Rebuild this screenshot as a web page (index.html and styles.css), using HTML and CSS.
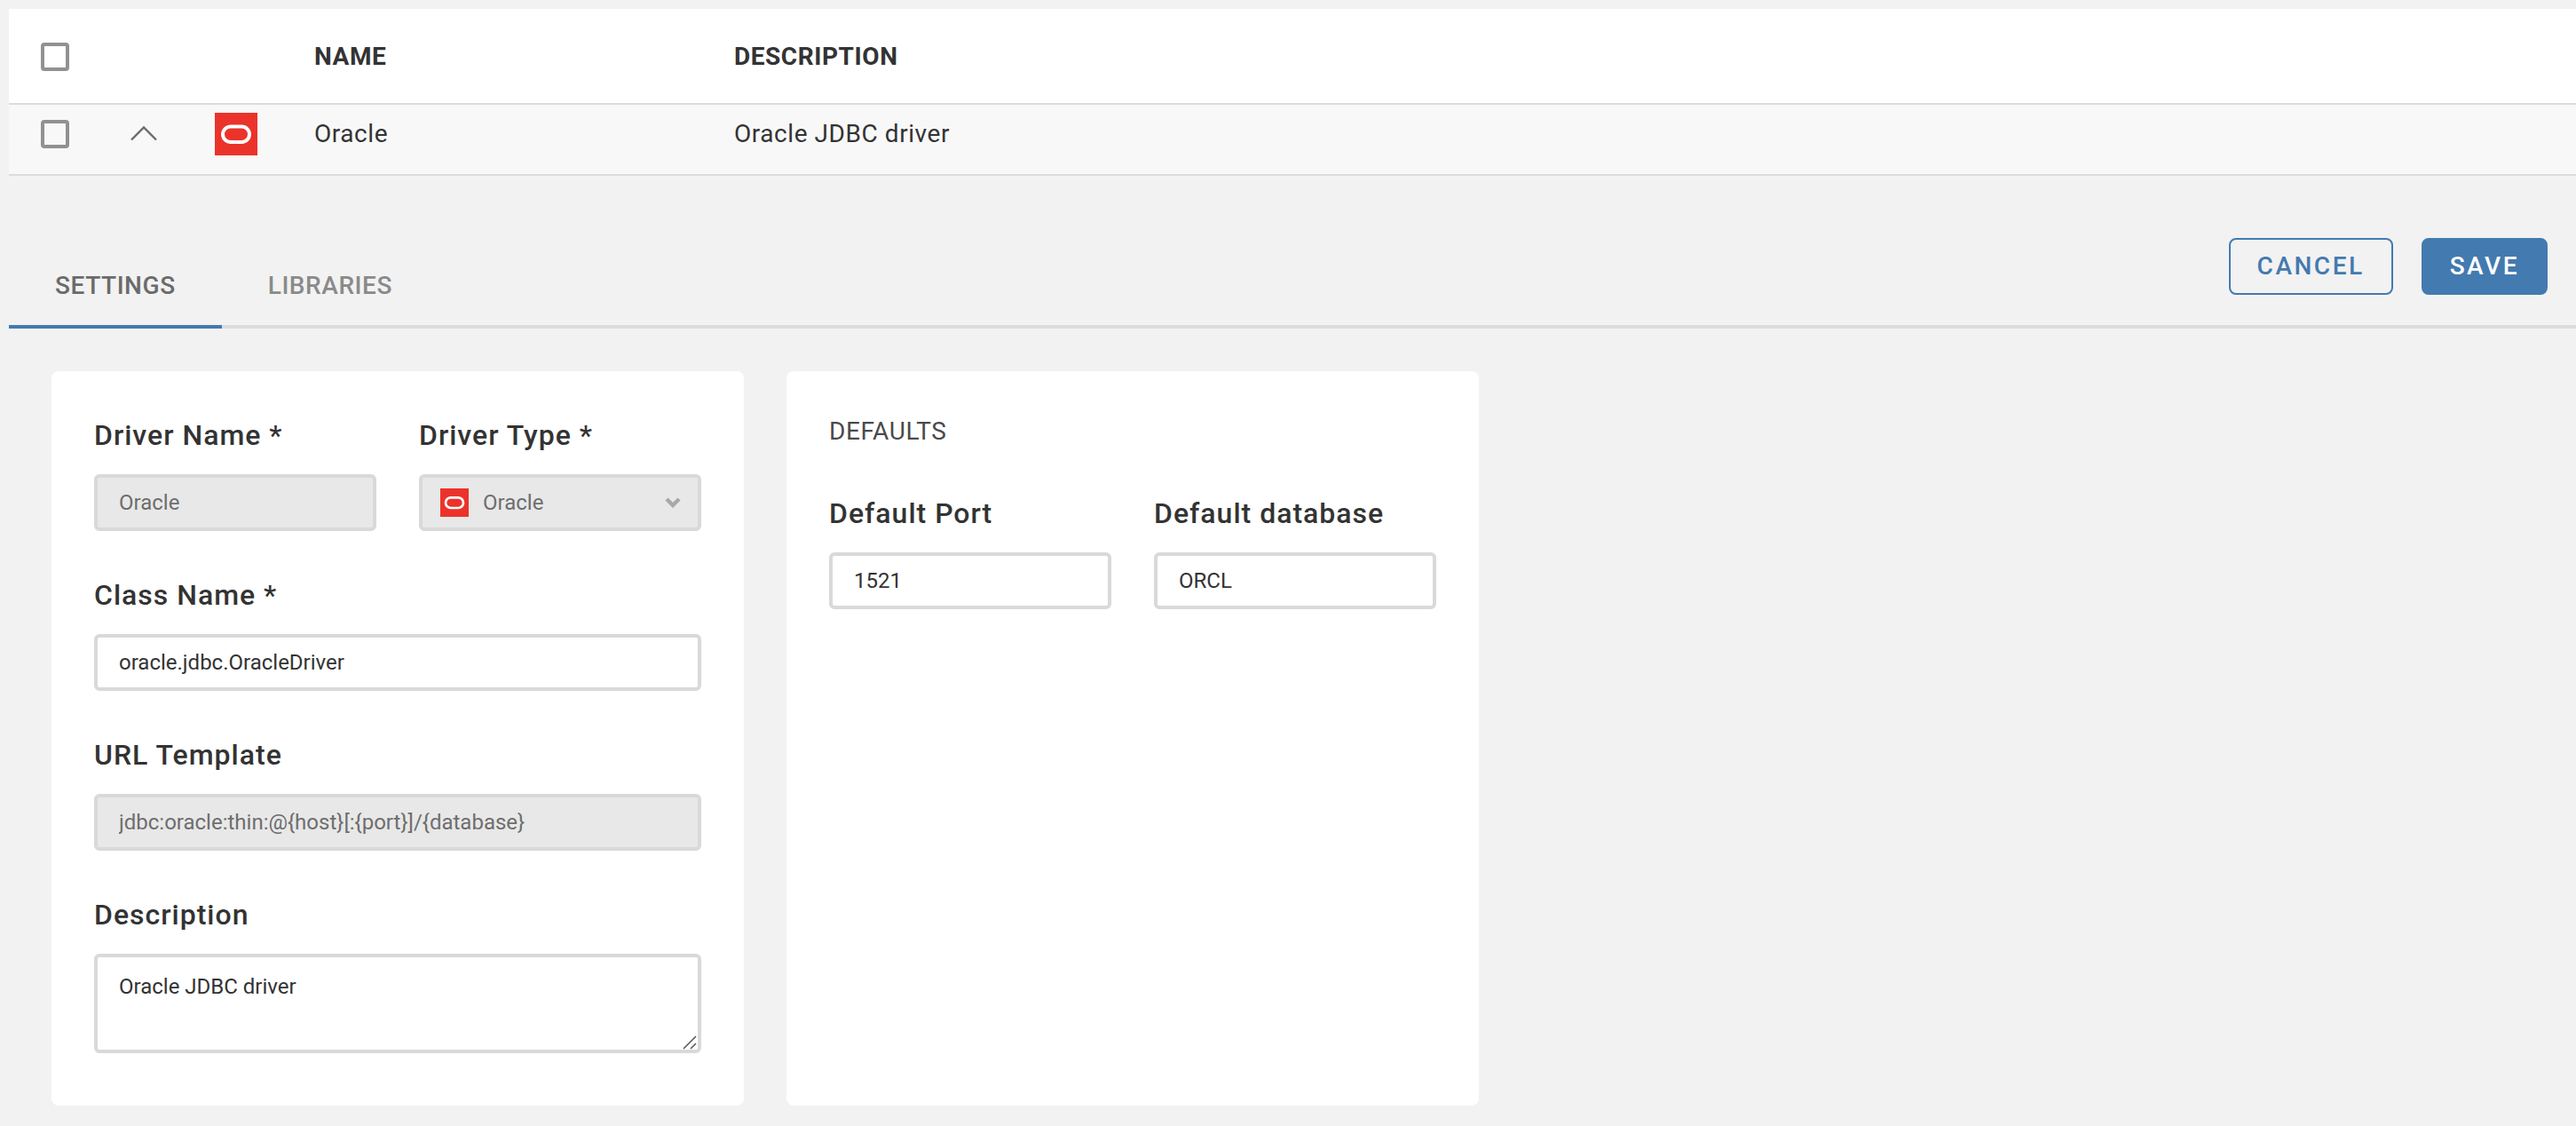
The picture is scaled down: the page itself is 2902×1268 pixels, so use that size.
FILE: index.html
```html
<!DOCTYPE html>
<html lang="en">
<head>
  <meta charset="utf-8">
  <title>Drivers</title>
  <link rel="stylesheet" href="styles.css">
</head>
<body>
  <svg class="sprite" aria-hidden="true">
    <symbol id="oracle" viewBox="0 0 48 48">
      <path fill="#eb332b" d="M0 0h48v48H0z"/>
      <rect x="9" y="15.5" width="30" height="17.5" rx="8.75" fill="none" stroke="#fff" stroke-width="4"/>
    </symbol>
  </svg>
  <main class="page">
    <table class="drivers">
      <colgroup>
        <col class="col-check"><col class="col-toggle"><col class="col-logo"><col class="col-name"><col>
      </colgroup>
      <thead>
        <tr>
          <th class="cell-check"><input class="checkbox" type="checkbox" aria-label="Select all"></th>
          <td></td>
          <td></td>
          <th class="cell-text" scope="col">NAME</th>
          <th class="cell-text" scope="col">DESCRIPTION</th>
        </tr>
      </thead>
      <tbody>
        <tr>
          <td class="cell-check"><input class="checkbox" type="checkbox" aria-label="Select Oracle"></td>
          <td>
            <button class="toggle" type="button" aria-label="Collapse" aria-expanded="true">
              <svg width="32" height="20" viewBox="0 0 32 20"><path d="M2 17.5 16 3.5l14 14" fill="none" stroke="#6b6b6b" stroke-width="2.4"/></svg>
            </button>
          </td>
          <td><svg class="logo" width="48" height="48"><use href="#oracle"/></svg></td>
          <td class="cell-text">Oracle</td>
          <td class="cell-text">Oracle JDBC driver</td>
        </tr>
      </tbody>
    </table>

    <header class="bar">
      <nav class="tabs">
        <button class="tab tab-active" type="button">SETTINGS</button>
        <button class="tab" type="button">LIBRARIES</button>
      </nav>
      <div class="actions">
        <button class="button" type="button">CANCEL</button>
        <button class="button button-primary" type="button">SAVE</button>
      </div>
    </header>

    <form class="panels">
      <section class="card">
        <div class="row">
          <div class="field">
            <label for="driver-name">Driver Name *</label>
            <input class="control" id="driver-name" type="text" value="Oracle" disabled>
          </div>
          <div class="field">
            <label for="driver-type">Driver Type *</label>
            <div class="overlay">
              <select class="control control-select" id="driver-type" disabled>
                <option>Oracle</option>
              </select>
              <svg class="select-logo" width="32" height="32"><use href="#oracle"/></svg>
              <svg class="select-arrow" width="18" height="12" viewBox="0 0 18 12"><path d="M2 2l7 7 7-7" fill="none" stroke="#a8a8a8" stroke-width="4.4"/></svg>
            </div>
          </div>
        </div>
        <div class="field">
          <label for="class-name">Class Name *</label>
          <input class="control" id="class-name" type="text" value="oracle.jdbc.OracleDriver">
        </div>
        <div class="field">
          <label for="url-template">URL Template</label>
          <input class="control" id="url-template" type="text" value="jdbc:oracle:thin:@{host}[:{port}]/{database}" disabled>
        </div>
        <div class="field">
          <label for="description">Description</label>
          <div class="overlay">
            <textarea class="control control-area" id="description">Oracle JDBC driver</textarea>
            <svg class="grip" width="16" height="16" viewBox="0 0 16 16"><path d="M1 15 15 1M9 15l6-6" fill="none" stroke="#555" stroke-width="1.5"/></svg>
          </div>
        </div>
      </section>

      <section class="card">
        <h2 class="card-title">DEFAULTS</h2>
        <div class="row">
          <div class="field">
            <label for="port">Default Port</label>
            <input class="control" id="port" type="text" value="1521">
          </div>
          <div class="field">
            <label for="database">Default database</label>
            <input class="control" id="database" type="text" value="ORCL">
          </div>
        </div>
      </section>
    </form>
  </main>
</body>
</html>
```

FILE: styles.css
```css
* {
  box-sizing: border-box;
}

body {
  margin: 0;
  background: #f2f2f2;
  color: #333;
  font-family: Roboto, sans-serif;
  font-size: 28px;
  line-height: 40px;
}

button,
input,
select,
textarea {
  margin: 0;
  font-family: inherit;
}

.sprite {
  display: none;
}

.page {
  padding: 10px 0 20px 10px;
}

/* Driver list */
.drivers {
  width: 100%;
  table-layout: fixed;
  border-collapse: separate;
  border-spacing: 0;
}

.col-check {
  width: 104px;
}

.col-toggle {
  width: 96px;
}

.col-logo {
  width: 112px;
}

.col-name {
  width: 473px;
}

.drivers th,
.drivers td {
  padding: 0;
  border-bottom: 2px solid #dcdcdc;
  text-align: center;
  vertical-align: middle;
}

.drivers thead tr {
  height: 108px;
  background: #fff;
}

.drivers thead th {
  padding-top: 2px;
}

.drivers tbody tr {
  height: 80px;
  background: #f8f8f8;
}

.drivers tbody td {
  padding-bottom: 12px;
}

.drivers .cell-check {
  padding-left: 36px;
  text-align: left;
}

.drivers .cell-text {
  padding-left: 32px;
  text-align: left;
  letter-spacing: 0.02em;
}

.checkbox {
  appearance: none;
  display: block;
  width: 32px;
  height: 32px;
  border: 4px solid #919191;
  border-radius: 4px;
}

.toggle {
  padding: 0;
  border: 0;
  background: none;
}

.toggle svg,
.logo {
  display: block;
  margin: 0 auto;
}

/* Tabs and actions */
.bar {
  display: flex;
  justify-content: space-between;
  align-items: flex-end;
  padding-top: 70px;
  border-bottom: 4px solid #dcdcdc;
}

.tabs {
  display: flex;
  margin-bottom: -4px;
}

.tab {
  padding: 0 52px 24px;
  border: 0;
  border-bottom: 4px solid transparent;
  background: none;
  color: #8a8a8a;
  font-size: 28px;
  font-weight: 500;
  line-height: 40px;
  letter-spacing: 0.02em;
}

.tab-active {
  border-color: #437ab0;
  color: #6b6b6b;
}

.actions {
  display: flex;
  gap: 32px;
  padding: 0 32px 34px 0;
}

.button {
  height: 64px;
  padding: 0 30px 2px;
  border: 2px solid #437ab0;
  border-radius: 8px;
  background: transparent;
  color: #437ab0;
  font-size: 28px;
  font-weight: 500;
  letter-spacing: 0.09em;
}

.button-primary {
  background: #437ab0;
  color: #fff;
}

/* Settings form */
.panels {
  display: flex;
  gap: 48px;
  padding: 48px;
  padding-bottom: 0;
}

.card {
  display: flex;
  flex: 0 1 780px;
  flex-direction: column;
  gap: 48px;
  padding: 48px 48px 59px;
  border-radius: 8px;
  background: #fff;
}

.card-title {
  margin: 0;
  color: #4a4a4a;
  font-size: 28px;
  font-weight: 400;
  letter-spacing: 0.02em;
}

.row {
  display: flex;
  gap: 48px;
}

.row .field {
  flex: 1;
}

.field {
  display: flex;
  flex-direction: column;
  gap: 20px;
  min-width: 0;
}

.field label {
  font-size: 32px;
  font-weight: 500;
  line-height: 48px;
  letter-spacing: 1px;
}

.control {
  display: block;
  width: 100%;
  height: 64px;
  padding: 0 24px;
  border: 4px solid #d9d9d9;
  border-radius: 6px;
  outline: 0;
  background: #fff;
  color: #333;
  font-size: 24px;
}

.control:disabled {
  background: #e8e8e8;
  color: #6e6e6e;
  opacity: 1;
}

.control-select {
  appearance: none;
  padding-left: 68px;
}

.control-area {
  height: 112px;
  padding: 16px 24px;
  line-height: 34px;
  resize: none;
}

/* Graphics drawn over a form control */
.overlay {
  position: relative;
}

.select-logo,
.select-arrow,
.grip {
  position: absolute;
  pointer-events: none;
}

.select-logo {
  top: 16px;
  left: 24px;
}

.select-arrow {
  top: 26px;
  right: 23px;
}

.grip {
  right: 5px;
  bottom: 4px;
}
```
